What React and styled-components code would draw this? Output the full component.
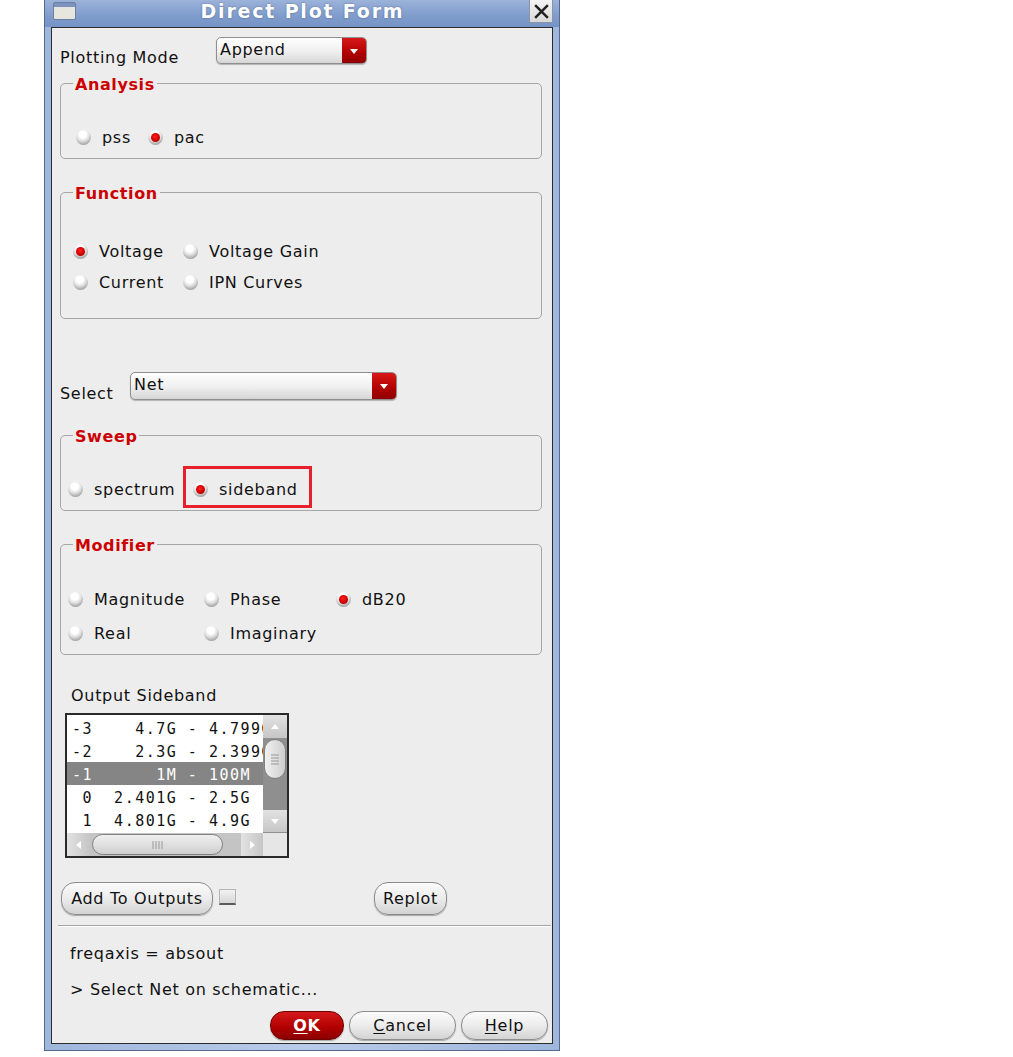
import React from "react";
import styled, { createGlobalStyle } from "styled-components";

const Global = createGlobalStyle`
  body {
    margin: 0;
    background: #ffffff;
    font-family: "DejaVu Sans", "Liberation Sans", sans-serif;
    color: #111;
  }
`;

const Frame = styled.div`
  margin-left: 44px;
  width: 516px;
  box-sizing: border-box;
  border: 1px solid #56698c;
  border-top: none;
  background: linear-gradient(90deg, #9fb6dd, #b9cbea 50%, #9fb6dd);
  padding: 0 6px 6px;
`;

const TitleBar = styled.div`
  height: 27px;
  margin: 0 -6px;
  padding: 0 6px 0 8px;
  display: flex;
  align-items: flex-start;
  background: linear-gradient(#9cb3da, #7f9ccc 60%, #7593c6);
`;

const WinIcon = styled.div`
  width: 21px;
  height: 16px;
  margin-top: 2px;
  border: 1px solid #6d7f9e;
  border-radius: 2px;
  background: linear-gradient(#7c93bf 0 4px, #e6e6df 4px);
`;

const Title = styled.div`
  flex: 1;
  text-align: center;
  color: #fff;
  font-weight: bold;
  font-size: 19px;
  letter-spacing: 1.8px;
  line-height: 22px;
  text-shadow: 0 0 2px rgba(40, 60, 100, 0.6);
`;

const CloseBtn = styled.div`
  width: 24px;
  height: 23px;
  box-sizing: border-box;
  border: 1px solid #8a94a6;
  border-top: none;
  background: linear-gradient(#f4f4f4, #d8d8d8);
  display: flex;
  align-items: center;
  justify-content: center;
`;

const Content = styled.div`
  height: 1017px;
  box-sizing: border-box;
  border: 1px solid #2c2c2c;
  background: #ededed;
  padding: 0 10px 0 8px;
  display: flex;
  flex-direction: column;
`;

const Row = styled.div`
  display: flex;
  align-items: flex-start;
  margin-top: ${(p) => p.mt || 0}px;
  margin-left: ${(p) => p.ml || 0}px;
`;

const Label = styled.div`
  width: ${(p) => (p.w ? `${p.w}px` : "auto")};
  margin-top: ${(p) => p.mt || 0}px;
  margin-left: ${(p) => p.ml || 0}px;
  font-size: 16px;
  letter-spacing: 0.7px;
  line-height: 18px;
  white-space: nowrap;
`;

const Combo = styled.div`
  width: ${(p) => p.w}px;
  height: ${(p) => p.h}px;
  box-sizing: border-box;
  display: flex;
  border: 1px solid #8e8e8e;
  border-radius: 5px;
  overflow: hidden;
  background: linear-gradient(#ffffff, #efefef 55%, #d6d6d6);
  box-shadow: 0 1px 1px rgba(0, 0, 0, 0.25);
`;

const ComboText = styled.div`
  flex: 1;
  padding-left: 3px;
  font-size: 16px;
  letter-spacing: 0.7px;
  line-height: 24px;
`;

const ComboArrow = styled.div`
  width: 24px;
  display: flex;
  align-items: center;
  justify-content: center;
  background: linear-gradient(#d81818, #b00000 60%, #8e0000);
`;

const Group = styled.div`
  position: relative;
  margin-top: ${(p) => p.mt}px;
  padding: ${(p) => p.pt}px 0 ${(p) => p.pb}px ${(p) => p.pl}px;
  border: 1px solid #a6a6a6;
  border-radius: 5px;
  display: grid;
  grid-template-columns: ${(p) => p.cols};
  row-gap: ${(p) => p.gap || 0}px;
  justify-items: start;
`;

const Legend = styled.div`
  position: absolute;
  top: -8px;
  left: 12px;
  padding: 0 2px;
  background: #ededed;
  color: #cc0000;
  font-weight: bold;
  font-size: 16px;
  letter-spacing: 0.6px;
  line-height: 18px;
`;

const Item = styled.div`
  position: relative;
  display: flex;
  align-items: center;
  height: 20px;
  font-size: 16px;
  letter-spacing: 0.7px;
  white-space: nowrap;
`;

const Dot = styled.span`
  width: 15px;
  height: 15px;
  box-sizing: border-box;
  margin-right: 11px;
  border-radius: 50%;
  background: radial-gradient(circle at 45% 30%, #ffffff 0 26%, #dcdcdc 50%, #a0a0a0 78%, #6e6e6e 100%);
  display: flex;
  align-items: center;
  justify-content: center;
  &::after {
    content: "";
    display: ${(p) => (p.on ? "block" : "none")};
    width: 9px;
    height: 9px;
    border-radius: 50%;
    background: radial-gradient(circle at 45% 40%, #ff2020, #d00000 55%, #800000);
  }
`;

const Highlight = styled.span`
  position: absolute;
  left: -10px;
  top: -13px;
  right: -14px;
  bottom: -9px;
  border: 3px solid #e8202c;
  pointer-events: none;
`;

const ListBox = styled.div`
  margin-top: 8px;
  margin-left: 5px;
  width: 224px;
  height: 145px;
  box-sizing: border-box;
  border: 2px solid #2a2a2a;
  display: grid;
  grid-template-columns: 1fr 24px;
  grid-template-rows: 1fr 23px;
  background: #fff;
`;

const Rows = styled.div`
  overflow: hidden;
  padding-top: 1px;
`;

const ListRow = styled.div`
  height: 23px;
  padding-left: 5px;
  white-space: pre;
  font-family: "DejaVu Sans Mono", "Liberation Mono", monospace;
  font-size: 15px;
  letter-spacing: 1.5px;
  line-height: 27px;
  background: ${(p) => (p.sel ? "#858585" : "transparent")};
  color: ${(p) => (p.sel ? "#fff" : "#111")};
`;

const VScroll = styled.div`
  display: flex;
  flex-direction: column;
  background: #8f8f8f;
`;

const HScroll = styled.div`
  display: flex;
  align-items: stretch;
  background: #c4c4c4;
`;

const ArrowBtn = styled.div`
  width: ${(p) => p.w}px;
  height: ${(p) => p.h}px;
  flex: none;
  display: flex;
  align-items: center;
  justify-content: center;
  background: linear-gradient(${(p) => (p.vert ? "180deg" : "90deg")}, #e2e2e2, #c6c6c6);
  margin-top: ${(p) => p.mt || 0}px;
`;

const VThumb = styled.div`
  margin: 1px 1px 0;
  height: 38px;
  border: 1px solid #808080;
  border-radius: 11px;
  background: linear-gradient(90deg, #f0f0f0, #cfcfcf);
  display: flex;
  align-items: center;
  justify-content: center;
`;

const HThumb = styled.div`
  margin: 1px 18px 1px 2px;
  flex: 1;
  border: 1px solid #808080;
  border-radius: 11px;
  background: linear-gradient(#f0f0f0, #cfcfcf);
  display: flex;
  align-items: center;
  justify-content: center;
`;

const Corner = styled.div`
  background: #e6e6e6;
`;

const Pill = styled.div`
  width: ${(p) => p.w}px;
  height: ${(p) => p.h}px;
  box-sizing: border-box;
  margin-left: ${(p) => p.ml || 0}px;
  border: 1px solid ${(p) => (p.red ? "#6e0000" : "#8c8c8c")};
  border-radius: 14px;
  display: flex;
  align-items: center;
  justify-content: center;
  font-size: 16px;
  letter-spacing: 0.7px;
  font-weight: ${(p) => (p.red ? "bold" : "normal")};
  color: ${(p) => (p.red ? "#fff" : "#111")};
  background: ${(p) =>
    p.red
      ? "linear-gradient(#d41a1a, #b30000 55%, #8c0000)"
      : "linear-gradient(#fbfbfb, #ececec 50%, #d3d3d3)"};
  box-shadow: 0 1px 1px rgba(0, 0, 0, 0.3);
  u {
    text-decoration-thickness: 1px;
    text-underline-offset: 2px;
  }
`;

const Toggle = styled.div`
  width: 15px;
  height: 13px;
  margin: 7px 0 0 6px;
  border: 1px solid #b5b5b5;
  border-bottom: 2px solid #5a5a5a;
  background: linear-gradient(#f2f2f2, #d6d6d6);
`;

const Separator = styled.div`
  margin: 10px -9px 0 -2px;
  height: 1px;
  background: #a4a4a4;
  border-bottom: 1px solid #ffffff;
`;

const Footer = styled.div`
  margin: 12px -6px 0 0;
  display: flex;
  justify-content: flex-end;
  gap: 5px;
`;

const Tri = ({ dir, size = 10, color = "#fff" }) => {
  const pts = {
    down: "1,3 9,3 5,8",
    up: "1,7 9,7 5,2",
    left: "7,1 7,9 2,5",
    right: "3,1 3,9 8,5",
  }[dir];
  return (
    <svg width={size} height={size} viewBox="0 0 10 10">
      <polygon points={pts} fill={color} />
    </svg>
  );
};

const Radio = ({ on, children, hl }) => (
  <Item>
    <Dot on={on} />
    {children}
    {hl && <Highlight />}
  </Item>
);

const sidebands = [
  { t: "-3    4.7G - 4.799G" },
  { t: "-2    2.3G - 2.399G" },
  { t: "-1      1M - 100M", sel: true },
  { t: " 0  2.401G - 2.5G" },
  { t: " 1  4.801G - 4.9G" },
];

export default function App() {
  return (
    <>
      <Global />
      <Frame>
        <TitleBar>
          <WinIcon />
          <Title>Direct Plot Form</Title>
          <CloseBtn>
            <svg width="17" height="17" viewBox="0 0 16 16">
              <path d="M2 2 L14 14 M14 2 L2 14" stroke="#222" strokeWidth="2.4" />
            </svg>
          </CloseBtn>
        </TitleBar>
        <Content>
          <Row mt={9}>
            <Label w={156} mt={12}>Plotting Mode</Label>
            <Combo w={151} h={27}>
              <ComboText>Append</ComboText>
              <ComboArrow>
                <Tri dir="down" />
              </ComboArrow>
            </Combo>
          </Row>

          <Group mt={16} pt={43} pb={11} pl={15} cols="72px auto">
            <Legend>Analysis</Legend>
            <Radio>pss</Radio>
            <Radio on>pac</Radio>
          </Group>

          <Group mt={33} pt={48} pb={26} pl={12} cols="110px auto" gap={11}>
            <Legend>Function</Legend>
            <Radio on>Voltage</Radio>
            <Radio>Voltage Gain</Radio>
            <Radio>Current</Radio>
            <Radio>IPN Curves</Radio>
          </Group>

          <Row mt={53}>
            <Label w={70} mt={13}>Select</Label>
            <Combo w={267} h={28}>
              <ComboText>Net</ComboText>
              <ComboArrow>
                <Tri dir="down" />
              </ComboArrow>
            </Combo>
          </Row>

          <Group mt={32} pt={43} pb={11} pl={7} cols="125px auto">
            <Legend>Sweep</Legend>
            <Radio>spectrum</Radio>
            <Radio on hl>sideband</Radio>
          </Group>

          <Group mt={33} pt={44} pb={11} pl={7} cols="136px 132px auto" gap={14}>
            <Legend>Modifier</Legend>
            <Radio>Magnitude</Radio>
            <Radio>Phase</Radio>
            <Radio on>dB20</Radio>
            <Radio>Real</Radio>
            <Radio>Imaginary</Radio>
          </Group>

          <Label mt={32} ml={11}>Output Sideband</Label>

          <ListBox>
            <Rows>
              {sidebands.map((r) => (
                <ListRow key={r.t} sel={r.sel}>{r.t}</ListRow>
              ))}
            </Rows>
            <VScroll>
              <ArrowBtn vert w={24} h={23}>
                <Tri dir="up" />
              </ArrowBtn>
              <VThumb>
                <svg width="10" height="12" viewBox="0 0 10 12">
                  <path d="M1 2H9M1 5H9M1 8H9M1 11H9" stroke="#9a9a9a" strokeWidth="1" />
                </svg>
              </VThumb>
              <ArrowBtn vert w={24} h={22} mt={31}>
                <Tri dir="down" />
              </ArrowBtn>
            </VScroll>
            <HScroll>
              <ArrowBtn w={23} h={23}>
                <Tri dir="left" />
              </ArrowBtn>
              <HThumb>
                <svg width="12" height="10" viewBox="0 0 12 10">
                  <path d="M1 1V9M4 1V9M7 1V9M10 1V9" stroke="#9a9a9a" strokeWidth="1" />
                </svg>
              </HThumb>
              <ArrowBtn w={22} h={23}>
                <Tri dir="right" />
              </ArrowBtn>
            </HScroll>
            <Corner />
          </ListBox>

          <Row mt={24} ml={1}>
            <Pill w={152} h={33}>Add To Outputs</Pill>
            <Toggle />
            <Pill w={73} h={33} ml={138}>Replot</Pill>
          </Row>

          <Separator />

          <Label mt={18} ml={10}>freqaxis = absout</Label>
          <Label mt={18} ml={10}>&gt; Select Net on schematic...</Label>

          <Footer>
            <Pill red w={74} h={29}><u>O</u>K</Pill>
            <Pill w={107} h={29}><u>C</u>ancel</Pill>
            <Pill w={87} h={29}><u>H</u>elp</Pill>
          </Footer>
        </Content>
      </Frame>
    </>
  );
}
